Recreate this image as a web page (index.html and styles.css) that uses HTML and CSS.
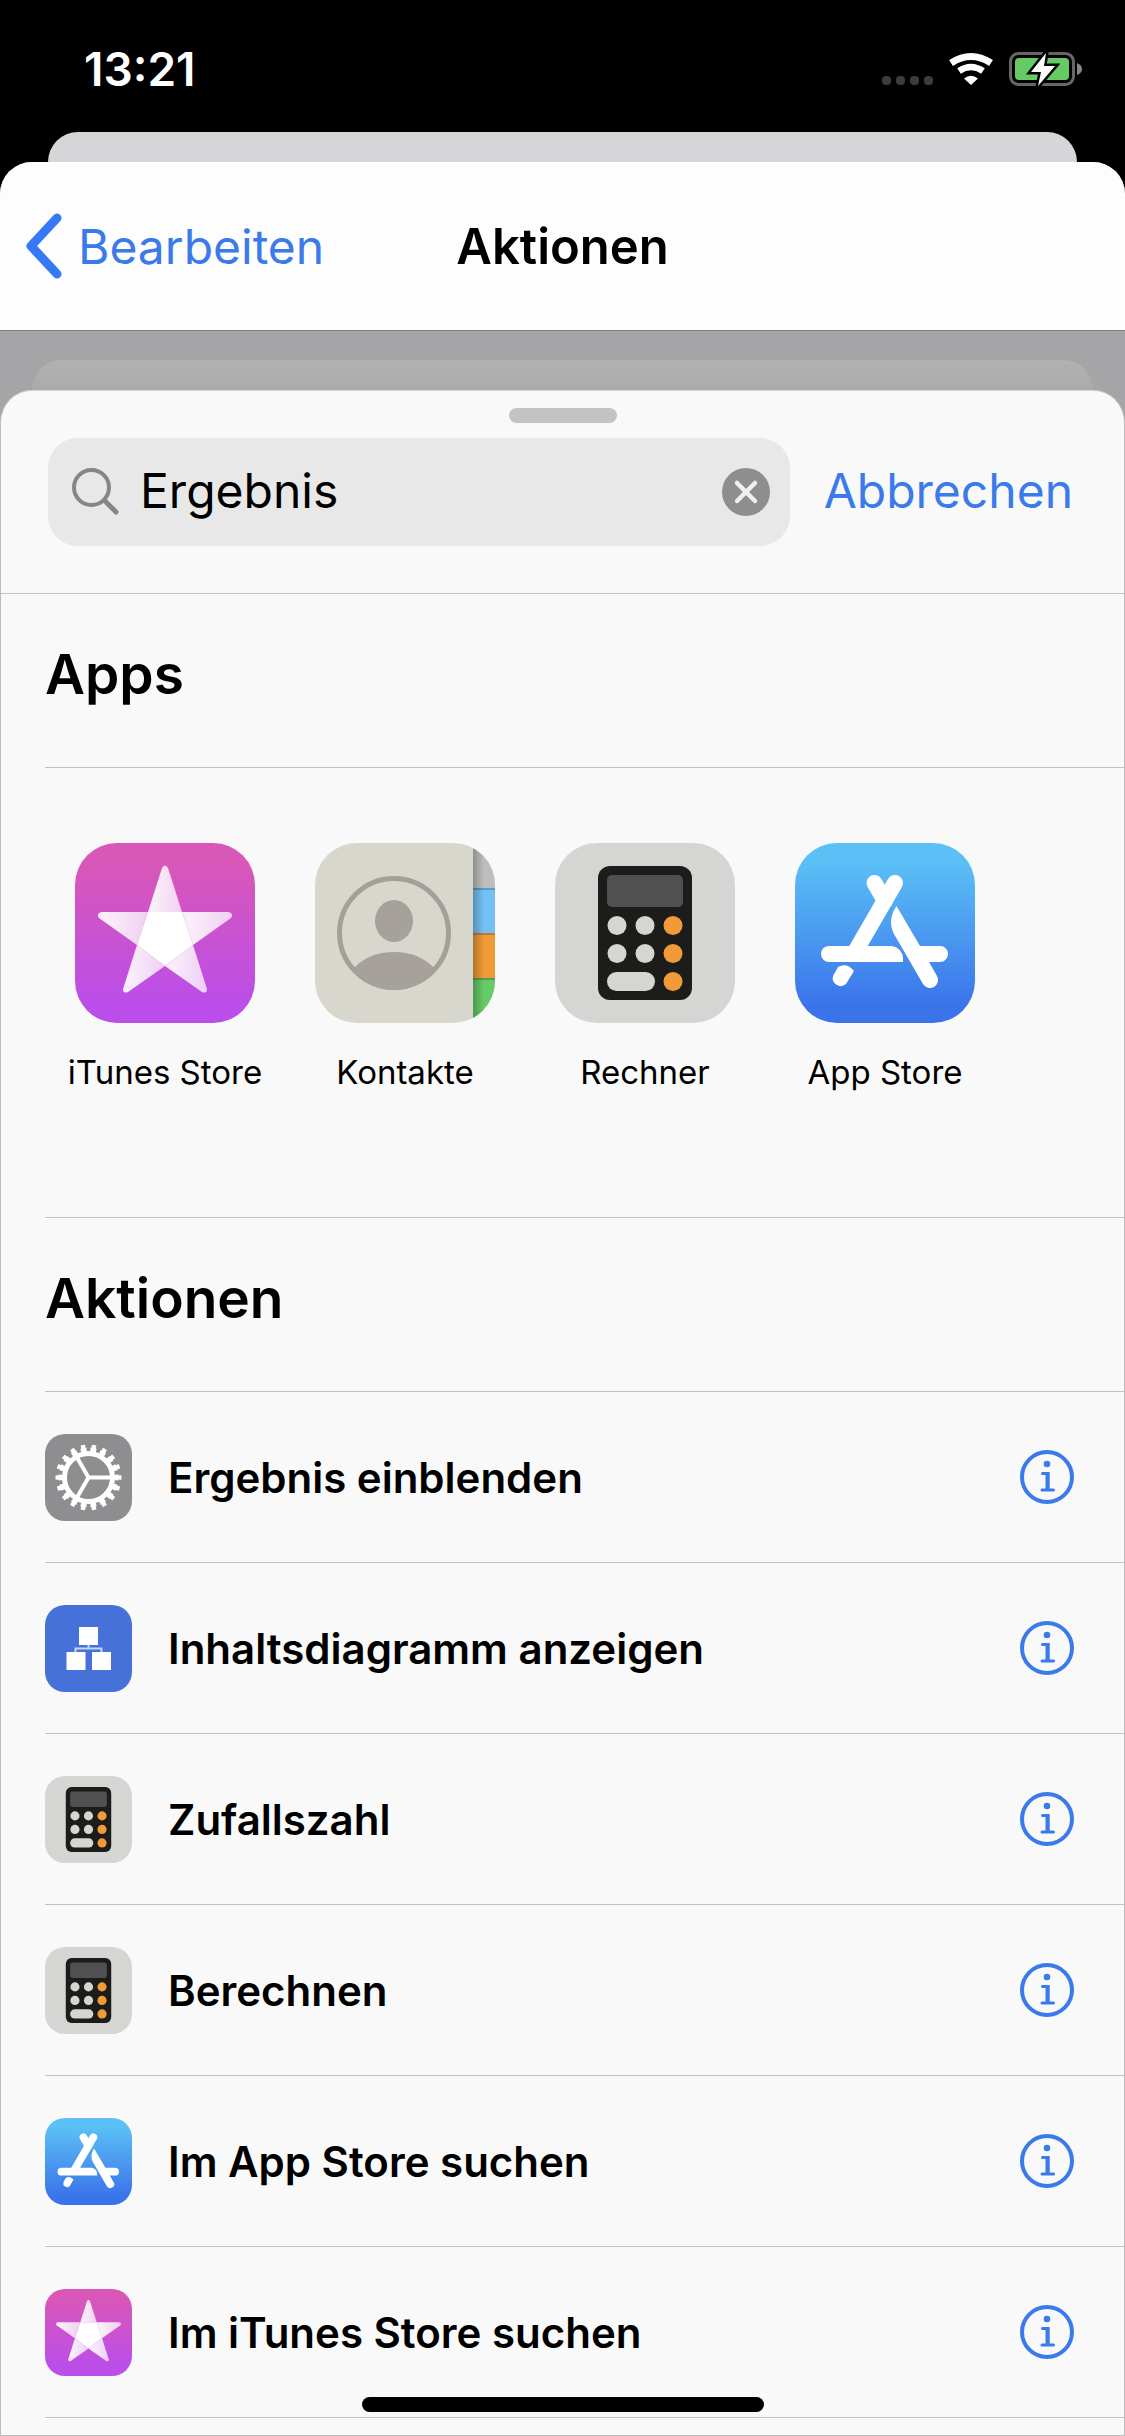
FILE: index.html
```html
<!DOCTYPE html>
<html lang="de">
<head>
    <meta charset="utf-8">
    <meta name="viewport" content="width=device-width, initial-scale=1">
    <title>Aktionen</title>
    <link rel="stylesheet" href="styles.css">
</head>
<body>
    <!-- shared icons -->
    <svg class="defs" aria-hidden="true">
        <defs>
            <linearGradient id="pink" x1="0" y1="0" x2="0" y2="1">
                <stop offset="0.1" stop-color="#d957b8"/>
                <stop offset="0.9" stop-color="#bb4ee9"/>
            </linearGradient>
            <linearGradient id="blue" x1="0" y1="0" x2="0" y2="1">
                <stop offset="0.1" stop-color="#5bc0f6"/>
                <stop offset="0.9" stop-color="#3b74ea"/>
            </linearGradient>
            <linearGradient id="arm" x1="0" y1="0" x2="1" y2="0">
                <stop offset="0.2" stop-color="#fff" stop-opacity="0.9"/>
                <stop offset="1" stop-color="#fff" stop-opacity="0.72"/>
            </linearGradient>
            <linearGradient id="shade" x1="0" y1="0" x2="1" y2="0">
                <stop offset="0" stop-color="#000" stop-opacity="0.25"/>
                <stop offset="0.5" stop-color="#000" stop-opacity="0"/>
            </linearGradient>
        </defs>
        <symbol id="itunes" viewBox="0 0 180 180">
            <rect width="180" height="180" fill="url(#pink)"/>
            <path fill="url(#arm)" d="M73 69L87 25Q90 20 93 25L107 69Z"/>
            <path fill="url(#arm)" d="M73 69H26Q21 71 24 75L62 102Z"/>
            <path fill="url(#arm)" d="M107 69H154Q159 71 156 75L118 102Z"/>
            <path fill="url(#arm)" d="M62 102L48 146Q48 151 53 149L90 123Z"/>
            <path fill="url(#arm)" d="M118 102L132 146Q132 151 127 149L90 123Z"/>
            <path fill="#fff" d="M73 69H107L118 102L90 123L62 102Z"/>
        </symbol>
        <symbol id="contacts" viewBox="0 0 180 180">
            <rect width="180" height="180" fill="#d7d7cd"/>
            <path fill="#bdbdbc" d="M158 0h22v45h-22z"/>
            <path fill="#73c0f6" d="M158 45h22v45h-22z"/>
            <path fill="#f09a38" d="M158 90h22v45h-22z"/>
            <path fill="#66ca66" d="M158 135h22v45h-22z"/>
            <path fill="url(#shade)" d="M158 0h22v180h-22z"/>
            <path stroke="#000" stroke-opacity="0.2" stroke-width="2" d="M158 46h22M158 91h22M158 136h22"/>
            <circle cx="79" cy="90" r="54.5" fill="none" stroke="#a4a099" stroke-width="5"/>
            <ellipse cx="79" cy="78" rx="19" ry="21" fill="#a6a19a"/>
            <path fill="#a6a19a" d="M39 125Q54 109 79 109T119 125Q104 147 79 147T39 125Z"/>
        </symbol>
        <symbol id="calculator" viewBox="0 0 180 180">
            <rect width="180" height="180" fill="#d5d5d3"/>
            <rect x="43" y="23" width="94" height="134" rx="12" fill="#1c1c1b"/>
            <rect x="52" y="32" width="76" height="32" rx="5" fill="#505050"/>
            <g fill="#d5d5d3">
                <circle cx="62" cy="82.5" r="9.5"/>
                <circle cx="90" cy="82.5" r="9.5"/>
                <circle cx="62" cy="110.5" r="9.5"/>
                <circle cx="90" cy="110.5" r="9.5"/>
                <rect x="52" y="129" width="48" height="19" rx="9.5"/>
            </g>
            <g fill="#f09a38">
                <circle cx="118" cy="82.5" r="9.5"/>
                <circle cx="118" cy="110.5" r="9.5"/>
                <circle cx="118" cy="138.5" r="9.5"/>
            </g>
        </symbol>
        <symbol id="appstore" viewBox="0 0 180 180">
            <rect width="180" height="180" fill="url(#blue)"/>
            <path fill="none" stroke="#fff" stroke-width="16" stroke-linecap="round" d="M100 40L60 109M79.5 40L90 58"/>
            <path fill="#fff" d="M34 103H97Q107 105 108 115V119H34A8 8 0 0 1 34 103Z"/>
            <path fill="#fff" d="M43 124Q52 119 59 128L51 141A8 8 0 0 1 38 133Z"/>
            <path fill="#fff" d="M101.5 63L125 103H145A8 8 0 0 1 145 119H134L142 133A8 8 0 0 1 128 141L99 91Q92 77 101.5 63Z"/>
        </symbol>
        <symbol id="gear" viewBox="0 0 87 87">
            <rect width="87" height="87" fill="#8e8e91"/>
            <g fill="none" stroke="#fff">
                <circle cx="43.5" cy="43.5" r="24" stroke-width="5"/>
                <circle cx="43.5" cy="43.5" r="27.5" stroke-width="5" pathLength="180" stroke-dasharray="6 4" stroke-dashoffset="3"/>
                <circle cx="43.5" cy="43.5" r="31" stroke-width="4" pathLength="180" stroke-dasharray="4 6" stroke-dashoffset="2"/>
                <path stroke-width="4" d="M43.5 43.5H67M43.5 43.5L32 23.5M43.5 43.5L32 63.5"/>
            </g>
        </symbol>
        <symbol id="diagram" viewBox="0 0 87 87">
            <rect width="87" height="87" fill="#4571d9"/>
            <path fill="none" stroke="#c5d7f8" stroke-width="2" d="M43.5 40V43M30.5 47V43.5H56.5V47"/>
            <path fill="#fff" d="M34 22h19v18h-19zM21.5 47h19v18h-19zM47 47h19v18h-19z"/>
        </symbol>
        <symbol id="info" viewBox="0 0 54 54">
            <circle cx="27" cy="27" r="25" fill="none" stroke="#3b7aea" stroke-width="4"/>
            <circle cx="27" cy="14" r="3.3" fill="#3b7aea"/>
            <path fill="none" stroke="#3b7aea" stroke-width="3" stroke-linecap="round" d="M22.5 23.5H28V40M22 40H33.5"/>
            <path stroke="#3b7aea" stroke-width="4" d="M27.5 22.5V40"/>
        </symbol>
    </svg>

    <div class="status">
        <span class="time">13:21</span>
        <svg class="indicators" viewBox="0 0 200 34" role="img" aria-label="WLAN, Batterie lädt">
            <g fill="#3c3c3c">
                <rect y="24" width="9" height="9" rx="4"/>
                <rect x="14" y="24" width="9" height="9" rx="4"/>
                <rect x="28" y="24" width="9" height="9" rx="4"/>
                <rect x="42" y="24" width="9" height="9" rx="4"/>
            </g>
            <g fill="none" stroke="#fff">
                <path stroke-width="7" d="M69 11Q89 -2 109 11"/>
                <path stroke-width="6.5" d="M77 19Q89 11 101 19"/>
            </g>
            <path fill="#fff" d="M89 33L82 26.5Q89 21 96 26.5Z"/>
            <rect x="128.5" y="1.5" width="63" height="31" rx="8" fill="none" stroke="#666" stroke-width="3"/>
            <path fill="#888" d="M195 11Q200 13 200 17T195 23Z"/>
            <rect x="133" y="6" width="54" height="22" rx="4" fill="#67cb65"/>
            <path fill="#fff" stroke="#000" stroke-width="5" paint-order="stroke" d="M164 1L149 20H159L156 34L173 14H162Z"/>
        </svg>
    </div>
    <div class="peek"></div>
    <div class="card">
        <header class="nav">
            <a class="back" href="#">
                <svg width="37" height="66" viewBox="0 0 37 66" aria-hidden="true">
                    <path fill="none" stroke="#3579f6" stroke-width="9" stroke-linecap="round" stroke-linejoin="round" d="M31 5L5 33L31 61"/>
                </svg>
                Bearbeiten
            </a>
            <h1>Aktionen</h1>
        </header>
        <div class="peek peek-dim"></div>
        <main class="sheet">
            <div class="handle"></div>
            <form class="search-row">
                <div class="search">
                    <label for="search" aria-label="Suchen">
                        <svg width="48" height="48" viewBox="0 0 48 48" aria-hidden="true">
                            <g fill="none" stroke="#868686" stroke-linecap="round">
                                <circle cx="19.5" cy="19.5" r="17.5" stroke-width="4"/>
                                <path stroke-width="5" d="M32.5 32.5L44 44"/>
                            </g>
                        </svg>
                    </label>
                    <input type="text" id="search" value="Ergebnis">
                    <button class="clear" type="reset" aria-label="Löschen">
                        <svg width="48" height="48" viewBox="0 0 48 48" aria-hidden="true">
                            <circle cx="24" cy="24" r="24" fill="#8e8e8f"/>
                            <path stroke="#f0f0f2" stroke-width="4.5" stroke-linecap="round" d="M15 15L33 33M33 15L15 33"/>
                        </svg>
                    </button>
                </div>
                <button class="cancel" type="button">Abbrechen</button>
            </form>

            <section>
                <h2>Apps</h2>
                <div class="apps">
                    <a class="app" href="#"><svg><use href="#itunes"/></svg>iTunes Store</a>
                    <a class="app" href="#"><svg><use href="#contacts"/></svg>Kontakte</a>
                    <a class="app" href="#"><svg><use href="#calculator"/></svg>Rechner</a>
                    <a class="app" href="#"><svg><use href="#appstore"/></svg>App Store</a>
                </div>
            </section>

            <section>
                <h2>Aktionen</h2>
                <ul class="actions">
                    <li>
                        <svg class="icon"><use href="#gear"/></svg>
                        <span>Ergebnis einblenden</span>
                        <button class="info" aria-label="Info"><svg><use href="#info"/></svg></button>
                    </li>
                    <li>
                        <svg class="icon"><use href="#diagram"/></svg>
                        <span>Inhaltsdiagramm anzeigen</span>
                        <button class="info" aria-label="Info"><svg><use href="#info"/></svg></button>
                    </li>
                    <li>
                        <svg class="icon"><use href="#calculator"/></svg>
                        <span>Zufallszahl</span>
                        <button class="info" aria-label="Info"><svg><use href="#info"/></svg></button>
                    </li>
                    <li>
                        <svg class="icon"><use href="#calculator"/></svg>
                        <span>Berechnen</span>
                        <button class="info" aria-label="Info"><svg><use href="#info"/></svg></button>
                    </li>
                    <li>
                        <svg class="icon"><use href="#appstore"/></svg>
                        <span>Im App Store suchen</span>
                        <button class="info" aria-label="Info"><svg><use href="#info"/></svg></button>
                    </li>
                    <li>
                        <svg class="icon"><use href="#itunes"/></svg>
                        <span>Im iTunes Store suchen</span>
                        <button class="info" aria-label="Info"><svg><use href="#info"/></svg></button>
                    </li>
                </ul>
            </section>
        </main>
    </div>
    <div class="home-bar"></div>
</body>
</html>
```
FILE: styles.css
```css
* {
    box-sizing: border-box;
}

body {
    margin: 0;
    min-height: 100vh;
    display: flex;
    flex-direction: column;
    background-color: #000;
    color: #000;
    font-family: Inter, "Liberation Sans", sans-serif;
    font-size: 48px;
}

svg {
    display: block;
    flex-shrink: 0;
}

a {
    color: inherit;
    text-decoration: none;
}

button {
    padding: 0;
    border: none;
    background: none;
    font: inherit;
    cursor: pointer;
}

.defs {
    position: absolute;
    width: 0;
    height: 0;
}

/* Status bar */
.status {
    display: flex;
    justify-content: space-between;
    align-items: center;
    height: 132px;
    padding: 6px 43px 0 84px;
    color: #fff;
}

.time {
    font-size: 46px;
    font-weight: 600;
}

.indicators {
    width: 200px;
    height: 34px;
}

/* Edges of the pages stacked behind */
.peek {
    height: 30px;
    margin: 0 48px;
    border-radius: 30px 30px 0 0;
    background-color: #d6d6d9;
}

.peek-dim {
    margin: 29px 32px 0;
    border-radius: 44px 44px 0 0;
    background: linear-gradient(#b2b2b1, #aaaaaa);
}

.card {
    flex: 1;
    display: flex;
    flex-direction: column;
    border-radius: 32px 32px 0 0;
    overflow: hidden;
    background-color: #a5a5a7;
}

/* Navigation */
.nav {
    display: grid;
    grid-template-columns: 1fr auto 1fr;
    align-items: center;
    height: 169px;
    padding: 0 26px;
    background-color: #fdfdfd;
    border-bottom: 1px solid #7c7c7d;
}

.nav h1 {
    margin: 0;
    font-size: 49px;
    font-weight: 600;
}

.back {
    display: flex;
    align-items: center;
    gap: 15px;
    color: #3b7aea;
}

/* Sheet */
.sheet {
    flex: 1;
    border: 1px solid #bcbcbd;
    border-radius: 32px 32px 0 0;
    border-top-color: #d4d4d4;
    background-color: #f9f9f9;
}

.handle {
    width: 108px;
    height: 15px;
    margin: 17px auto 15px;
    border-radius: 8px;
    background-color: #c3c3c4;
}

.search-row {
    display: flex;
    align-items: center;
    gap: 34px;
    padding: 0 51px 47px 47px;
    border-bottom: 1px solid #c2c2c4;
}

.search {
    flex: 1;
    display: flex;
    align-items: center;
    gap: 20px;
    min-width: 0;
    height: 108px;
    padding: 0 20px 0 24px;
    border-radius: 30px;
    background-color: #e8e8e8;
}

.search input {
    flex: 1;
    min-width: 0;
    padding: 0 0 4px;
    border: none;
    outline: none;
    background: none;
    color: #000;
    font: inherit;
}

.cancel {
    padding-bottom: 4px;
    color: #3b7aea;
}

section {
    padding-left: 44px;
}

h2 {
    display: flex;
    align-items: center;
    height: 174px;
    margin: 0;
    padding-bottom: 14px;
    border-bottom: 1px solid #c2c2c4;
    font-size: 55px;
    font-weight: 600;
}

.apps {
    display: grid;
    grid-template-columns: repeat(auto-fill, 240px);
    height: 450px;
    padding-top: 75px;
    border-bottom: 1px solid #c2c2c4;
}

.app {
    display: flex;
    flex-direction: column;
    align-items: center;
    gap: 29px;
    font-size: 33px;
    line-height: 40px;
}

.app svg {
    width: 180px;
    height: 180px;
    border-radius: 42px;
}

.actions {
    margin: 0;
    padding: 0;
    list-style: none;
}

.actions li {
    display: flex;
    align-items: center;
    gap: 36px;
    height: 171px;
    padding-right: 50px;
    border-bottom: 1px solid #c2c2c4;
    font-size: 42px;
    font-weight: 600;
}

.actions span {
    flex: 1;
}

.icon {
    width: 87px;
    height: 87px;
    border-radius: 20px;
}

.info svg {
    width: 54px;
    height: 54px;
}

.home-bar {
    position: fixed;
    left: 50%;
    bottom: 24px;
    width: 402px;
    height: 15px;
    margin-left: -201px;
    border-radius: 8px;
    background-color: #000;
}
```
